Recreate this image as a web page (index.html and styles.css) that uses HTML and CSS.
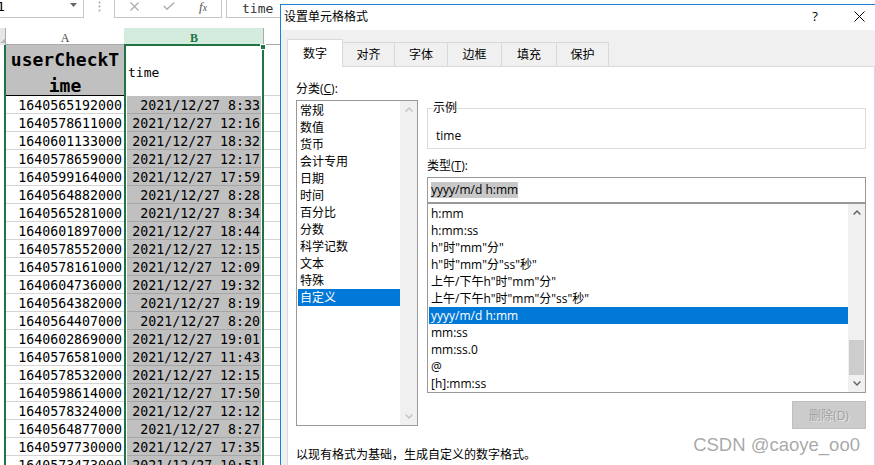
FILE: index.html
```html
<!DOCTYPE html>
<html lang="zh-CN">
<head>
<meta charset="utf-8">
<title>设置单元格格式</title>
<link rel="stylesheet" href="styles.css">
</head>
<body>
<div class="app">
  <section class="sheet">
    <div class="fbar">
      <div class="namebox"><span class="nb-text">1</span><svg class="nb-drop" width="7" height="4" viewBox="0 0 7 4"><path d="M0 0H7L3.5 4Z" fill="#666"/></svg></div>
      <svg class="fdots" width="3" height="11" viewBox="0 0 3 11"><circle cx="1.5" cy="1.5" r="1" fill="#a6a6a6"/><circle cx="1.5" cy="5.5" r="1" fill="#a6a6a6"/><circle cx="1.5" cy="9.5" r="1" fill="#a6a6a6"/></svg>
      <div class="fbtns">
        <svg width="9" height="9" viewBox="0 0 9 9"><path d="M0.5 0.5L8.5 8.5M8.5 0.5L0.5 8.5" stroke="#ababab" stroke-width="1.2" fill="none"/></svg>
        <svg width="12" height="8" viewBox="0 0 12 8"><path d="M0.8 4L4 7.2L11.2 0.6" fill="none" stroke="#ababab" stroke-width="1.4"/></svg>
        <span class="fx">f<small>x</small></span>
      </div>
      <div class="finput">time</div>
    </div>
    <div class="grid">
      <div class="corner"></div><div class="hc">A</div><div class="hc hc-b">B</div><div class="hc"></div>
      <div class="rh"></div><div class="a a1">userCheckT<br>ime</div><div class="b b1">time<span class="handle"></span></div><div class="c"></div>
      <div class="rh"></div><div class="a">1640565192000</div><div class="b">2021/12/27 8:33</div><div class="c"></div>
      <div class="rh"></div><div class="a">1640578611000</div><div class="b">2021/12/27 12:16</div><div class="c"></div>
      <div class="rh"></div><div class="a">1640601133000</div><div class="b">2021/12/27 18:32</div><div class="c"></div>
      <div class="rh"></div><div class="a">1640578659000</div><div class="b">2021/12/27 12:17</div><div class="c"></div>
      <div class="rh"></div><div class="a">1640599164000</div><div class="b">2021/12/27 17:59</div><div class="c"></div>
      <div class="rh"></div><div class="a">1640564882000</div><div class="b">2021/12/27 8:28</div><div class="c"></div>
      <div class="rh"></div><div class="a">1640565281000</div><div class="b">2021/12/27 8:34</div><div class="c"></div>
      <div class="rh"></div><div class="a">1640601897000</div><div class="b">2021/12/27 18:44</div><div class="c"></div>
      <div class="rh"></div><div class="a">1640578552000</div><div class="b">2021/12/27 12:15</div><div class="c"></div>
      <div class="rh"></div><div class="a">1640578161000</div><div class="b">2021/12/27 12:09</div><div class="c"></div>
      <div class="rh"></div><div class="a">1640604736000</div><div class="b">2021/12/27 19:32</div><div class="c"></div>
      <div class="rh"></div><div class="a">1640564382000</div><div class="b">2021/12/27 8:19</div><div class="c"></div>
      <div class="rh"></div><div class="a">1640564407000</div><div class="b">2021/12/27 8:20</div><div class="c"></div>
      <div class="rh"></div><div class="a">1640602869000</div><div class="b">2021/12/27 19:01</div><div class="c"></div>
      <div class="rh"></div><div class="a">1640576581000</div><div class="b">2021/12/27 11:43</div><div class="c"></div>
      <div class="rh"></div><div class="a">1640578532000</div><div class="b">2021/12/27 12:15</div><div class="c"></div>
      <div class="rh"></div><div class="a">1640598614000</div><div class="b">2021/12/27 17:50</div><div class="c"></div>
      <div class="rh"></div><div class="a">1640578324000</div><div class="b">2021/12/27 12:12</div><div class="c"></div>
      <div class="rh"></div><div class="a">1640564877000</div><div class="b">2021/12/27 8:27</div><div class="c"></div>
      <div class="rh"></div><div class="a">1640597730000</div><div class="b">2021/12/27 17:35</div><div class="c"></div>
      <div class="rh"></div><div class="a">1640573473000</div><div class="b">2021/12/27 10:51</div><div class="c"></div>
    </div>
  </section>

  <section class="dialog">
    <header class="titlebar">
      <span class="title">设置单元格格式</span>
      <span class="help">?</span>
      <span class="close"><svg width="11" height="11" viewBox="0 0 11 11"><path d="M0.5 0.5L10.5 10.5M10.5 0.5L0.5 10.5" stroke="#000" stroke-width="1" fill="none"/></svg></span>
    </header>
    <div class="dbody">
      <div class="tabs">
        <div class="tab active w56">数字</div>
        <div class="tab w52">对齐</div>
        <div class="tab w53">字体</div>
        <div class="tab w54">边框</div>
        <div class="tab w55">填充</div>
        <div class="tab w52">保护</div>
      </div>
      <div class="panel">
        <div class="cols">
          <div class="lcol">
            <div class="lbl">分类(<u>C</u>):</div>
            <div class="listbox catlist">
              <div class="items">
                <div class="item">常规</div>
                <div class="item">数值</div>
                <div class="item">货币</div>
                <div class="item">会计专用</div>
                <div class="item">日期</div>
                <div class="item">时间</div>
                <div class="item">百分比</div>
                <div class="item">分数</div>
                <div class="item">科学记数</div>
                <div class="item">文本</div>
                <div class="item">特殊</div>
                <div class="item sel">自定义</div>
              </div>
              <div class="sb">
                <div class="sb-btn"><svg width="8" height="5" viewBox="0 0 8 5"><path d="M0.6 4.4L4 1L7.4 4.4" fill="none" stroke="#c4c4c4" stroke-width="1.4"/></svg></div>
                <div class="sb-track"></div>
                <div class="sb-btn"><svg width="8" height="5" viewBox="0 0 8 5"><path d="M0.6 0.6L4 4L7.4 0.6" fill="none" stroke="#c4c4c4" stroke-width="1.4"/></svg></div>
              </div>
            </div>
          </div>
          <div class="rcol">
            <div class="group">
              <span class="legend">示例</span>
              time
            </div>
            <div class="lbl lbl2">类型(<u>T</u>):</div>
            <div class="tinput"><span class="selt">yyyy/m/d h:mm</span></div>
            <div class="listbox fmtlist">
              <div class="items">
                <div class="item">h:mm</div>
                <div class="item">h:mm:ss</div>
                <div class="item">h"时"mm"分"</div>
                <div class="item">h"时"mm"分"ss"秒"</div>
                <div class="item">上午/下午h"时"mm"分"</div>
                <div class="item">上午/下午h"时"mm"分"ss"秒"</div>
                <div class="item sel">yyyy/m/d h:mm</div>
                <div class="item">mm:ss</div>
                <div class="item">mm:ss.0</div>
                <div class="item">@</div>
                <div class="item">[h]:mm:ss</div>
              </div>
              <div class="sb">
                <div class="sb-btn"><svg width="8" height="5" viewBox="0 0 8 5"><path d="M0.6 4.4L4 1L7.4 4.4" fill="none" stroke="#606060" stroke-width="1.4"/></svg></div>
                <div class="sb-track"><div class="sb-thumb"></div></div>
                <div class="sb-btn"><svg width="8" height="5" viewBox="0 0 8 5"><path d="M0.6 0.6L4 4L7.4 0.6" fill="none" stroke="#606060" stroke-width="1.4"/></svg></div>
              </div>
            </div>
            <div class="delbtn">删除(D)</div>
          </div>
        </div>
        <p class="hint">以现有格式为基础，生成自定义的数字格式。</p>
      </div>
    </div>
  </section>
  <div class="wm">CSDN @caoye_oo0</div>
</div>
</body>
</html>
```
FILE: styles.css
```css
* { box-sizing: border-box; }
html, body { margin: 0; padding: 0; }
body {
  width: 875px; height: 465px; overflow: hidden; background: #fff;
  font-family: "Open Sans", "Noto Sans CJK SC", sans-serif;
  font-size: 12px; color: #000;
}
.app { position: relative; display: flex; width: 875px; height: 465px; overflow: hidden; }

/* ---------- spreadsheet ---------- */
.sheet { flex: none; width: 280px; display: flex; flex-direction: column; overflow: hidden; }
.fbar { flex: none; height: 28px; display: flex; align-items: flex-start; }
.namebox {
  flex: none; width: 84px; height: 18px;
  border-right: 1px solid #c6c6c6; border-bottom: 1px solid #c6c6c6;
  display: flex; align-items: flex-start; justify-content: space-between; padding-right: 6px;
}
.nb-text { margin-left: -3px; font: 13px/13px "DejaVu Sans Mono", monospace; color: #000; }
.nb-drop { margin-top: 3px; }
.fdots { flex: none; margin: 1px 0 0 14px; }
.fbtns {
  flex: none; width: 108px; height: 18px; margin-left: 13px;
  border: 1px solid #c6c6c6; border-top: none;
  display: flex; align-items: center; gap: 24px; padding: 0 0 5px 15px;
}
.fx { font: italic 13px/1 "Liberation Serif", serif; color: #555; }
.fx small { font-size: 10px; }
.finput {
  flex: 1; height: 18px; margin-left: 4px;
  border-left: 1px solid #c6c6c6; border-bottom: 1px solid #c6c6c6;
  padding-left: 15px; font: 13px/17px "DejaVu Sans Mono", monospace; color: #333;
}

.grid {
  display: grid;
  grid-template-columns: 6px 118px 140px 16px;
  grid-template-rows: 17px 51px;
  grid-auto-rows: 18px;
  font-family: "DejaVu Sans Mono", monospace;
}
.corner {
  background: linear-gradient(135deg, transparent 50%, #b8b8b8 50%) right 1px bottom 2px / 4px 4px no-repeat, #e6e6e6;
  box-shadow: inset -1px 0 #ababab;
}
.hc {
  font: 12px/20px "Liberation Serif", serif; text-align: center; color: #444;
  box-shadow: inset 0 -1px #ababab; overflow: hidden;
}
.hc-b { background: #d3ecdd; color: #217346; font-weight: bold; box-shadow: inset 0 -1px #217346, inset -1px 0 #ababab; }
.rh { border-right: 2px solid #217346; background: #fff; }
.a {
  background: #fff; box-shadow: inset 0 -1px #d4d4d4;
  text-align: right; padding: 1px 2px 0 0;
  font-size: 13.25px; line-height: 18px; white-space: nowrap; overflow: hidden; color: #000;
}
.b {
  border-left: 2px solid #217346; border-right: 2px solid #217346;
  background: #c0c0c0;
  box-shadow: inset 1px 0 #fff, inset -1px 0 #fff, inset 0 -1px #a6a6a6;
  text-align: right; padding: 1px 2px 0 0;
  font-size: 13.25px; line-height: 18px; white-space: nowrap; overflow: hidden; color: #000;
}
.c { box-shadow: inset 0 -1px #d4d4d4; }
.a1 {
  background: #c0c0c0; box-shadow: inset 0 -1px #000;
  font-weight: bold; font-size: 18px; line-height: 26px;
  text-align: center; padding: 2px 0 0; white-space: normal;
}
.b1 {
  position: relative; background: #fff; border-top: 1px solid #217346;
  box-shadow: none; text-align: left; padding: 18px 0 0 2px;
  font-size: 13px; line-height: 17px; overflow: visible;
}
.handle {
  position: absolute; right: -4px; top: -2px; width: 6px; height: 6px;
  background: #217346; border: 1px solid #fff;
}

/* ---------- dialog ---------- */
.dialog {
  flex: 1; min-width: 0; margin-top: 4px;
  border-top: 1px solid #1f7fd6; border-left: 1px solid #1f7fd6;
  background: #f0f0f0; display: flex; flex-direction: column;
}
.titlebar { flex: none; height: 25px; background: #fff; display: flex; align-items: center; padding: 0 0 2px 3px; }
.title { flex: 1; line-height: 17px; }
.help { width: 44px; margin-right: 6px; text-align: center; font-size: 13px; line-height: 17px; }
.close { width: 32px; display: flex; justify-content: center; }

.dbody { flex: 1; min-height: 0; display: flex; flex-direction: column; padding: 9px 0 0 6px; }
.tabs { flex: none; height: 27px; display: flex; align-items: flex-end; position: relative; z-index: 1; }
.tab {
  height: 24px; border: 1px solid #d9d9d9; border-bottom: none; border-left: none;
  background: #f0f0f0; display: flex; align-items: center; justify-content: center; line-height: 16px;
}
.tab.active { height: 28px; margin-bottom: -1px; border-left: 1px solid #d9d9d9; background: #fff; }
.w52 { width: 52px; } .w53 { width: 53px; } .w54 { width: 54px; } .w55 { width: 55px; } .w56 { width: 56px; }

.panel {
  flex: 1; background: #fff; border: 1px solid #d9d9d9; border-bottom: none;
  padding: 13px 8px 0 8px; display: flex; flex-direction: column;
}
.cols { display: grid; grid-template-columns: 122px 439px; column-gap: 9px; align-items: start; }
.lcol, .rcol { display: flex; flex-direction: column; }
.lbl { line-height: 17px; }
.lbl u { text-decoration: underline; text-underline-offset: 1px; }

.listbox { border: 1px solid #999; display: flex; background: #fff; }
.catlist { margin-top: 3px; height: 326px; }
.fmtlist { height: 190px; }
.items { flex: 1; min-width: 0; padding: 1px 0 0 1px; }
.item { line-height: 17px; padding-left: 2px; white-space: nowrap; }
.item.sel { background: #0078d7; color: #fff; }
.sb { flex: none; width: 17px; background: #f0f0f0; display: flex; flex-direction: column; }
.sb-btn { flex: none; height: 17px; display: flex; align-items: center; justify-content: center; }
.sb-track { flex: 1; display: flex; flex-direction: column; justify-content: flex-end; padding: 0 1px; }
.sb-thumb { height: 35px; background: #cdcdcd; }

.group {
  position: relative; margin-top: 28px; height: 41px;
  border: 1px solid #dcdcdc; padding: 18px 0 0 8px; line-height: 17px;
}
.legend { position: absolute; top: -10px; left: 5px; background: #fff; line-height: 17px; }
.lbl2 { margin-top: 8px; }
.tinput {
  margin-top: 3px; height: 26px; border: 1px solid #999;
  display: flex; align-items: center; padding-left: 3px;
}
.selt { background: #c8c8c8; line-height: 16px; }
.delbtn {
  align-self: flex-end; margin-top: 8px; width: 74px; height: 28px;
  background: #cccccc; border: 1px solid #bfbfbf; color: #a0a0a0;
  display: flex; align-items: center; justify-content: center;
  text-shadow: 1px 1px 0 rgba(255,255,255,.5);
}
.hint { margin: 17px 0 0; line-height: 17px; }

.wm {
  position: absolute; right: 15px; top: 435px;
  font: 18.5px/20px "Liberation Sans", Arial, sans-serif;
  color: rgba(140,140,140,.75); text-shadow: 0 0 1px rgba(255,255,255,.9);
  white-space: nowrap;
}
```
